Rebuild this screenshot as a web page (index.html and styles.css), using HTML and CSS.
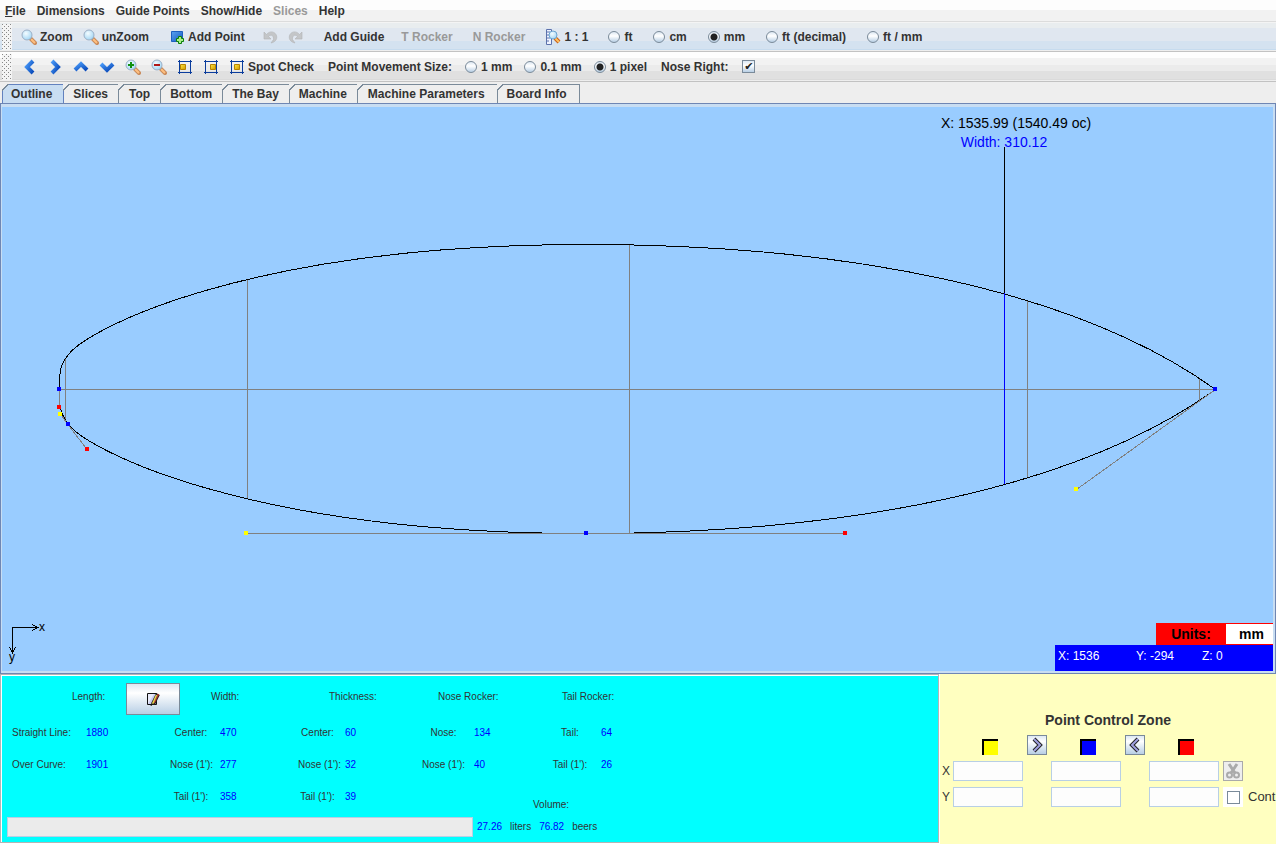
FILE: index.html
```html
<!DOCTYPE html>
<html lang="en">
<head>
<meta charset="utf-8">
<title>Board Designer</title>
<link rel="stylesheet" href="styles.css">
</head>
<body>
<svg class="defs" width="0" height="0" aria-hidden="true">
  <defs>
    <linearGradient id="gold" x1="0" y1="0" x2="1" y2="1"><stop offset="0" stop-color="#ffe640"/><stop offset="1" stop-color="#d09a00"/></linearGradient>
    <linearGradient id="blue" x1="0" y1="0" x2="1" y2="1"><stop offset="0" stop-color="#5aa2f0"/><stop offset="1" stop-color="#1458c0"/></linearGradient>
    <linearGradient id="arrow" x1="0" y1="0" x2="1" y2="1"><stop offset="0" stop-color="#4a9af8"/><stop offset="1" stop-color="#0848b8"/></linearGradient>
    <radialGradient id="lens" cx="0.4" cy="0.35" r="0.7"><stop offset="0" stop-color="#f4fcff"/><stop offset="1" stop-color="#9ed4f4"/></radialGradient>
    <symbol id="magnifier" viewBox="0 0 16 16">
      <path d="M9 9l5 5" stroke="#c98a5a" stroke-width="4" stroke-linecap="round"/>
      <path d="M10 10l4 4" stroke="#ffc080" stroke-width="2"/>
      <path d="M8 8l2 2" stroke="#8a9097" stroke-width="2"/>
      <circle cx="6" cy="6" r="5" fill="url(#lens)" stroke="#9db0c6"/>
    </symbol>
    <symbol id="undo" viewBox="0 0 16 16">
      <path d="M2 3v7h7L6.500 7.500C9 5 12 6.500 11.500 10.500L9 14c5-1 7-5 5-8.500C12 2 7 2 4.500 5.500z" fill="#c4c6c8" stroke="#b2b4b6" stroke-width=".6"/>
    </symbol>
  </defs>
</svg>
<div class="app">
  <nav class="menubar">
    <button><u>F</u>ile</button><button>Dimensions</button><button>Guide Points</button><button>Show/Hide</button><button disabled>Slices</button><button>Help</button>
  </nav>

  <div class="toolbar toolbar-blue">
    <span class="grip"></span>
    <button class="tool"><svg class="icon"><use href="#magnifier"/></svg>Zoom</button>
    <button class="tool"><svg class="icon"><use href="#magnifier"/></svg>unZoom</button>
    <button class="tool space-m"><svg class="icon" viewBox="0 0 16 16"><path d="M2.500 2.500h11v10h-11z" fill="url(#blue)" stroke="#1d5fc0"/><path d="M9.500 7.500h3v2h2v3h-2v2h-3v-2h-2v-3h2z" fill="#a8f088" stroke="#0a7d0a"/></svg>Add Point</button>
    <button class="tool space-s" disabled aria-label="Undo"><svg class="icon"><use href="#undo"/></svg></button>
    <button class="tool" disabled aria-label="Redo"><svg class="icon flip"><use href="#undo"/></svg></button>
    <button class="tool space-m">Add Guide</button>
    <button class="tool space-s" disabled>T Rocker</button>
    <button class="tool space-m" disabled>N Rocker</button>
    <button class="tool space-m"><svg class="icon" viewBox="0 0 16 16"><path d="M1.500 .5h5v15h-5z" fill="#eef3ff" stroke="#5c72ac"/><path d="M2 3h3M2 6h2M2 9h3M2 12h2" stroke="#5c72ac"/><path d="M10 9l4 4" stroke="#c86018" stroke-width="4"/><path d="M10 9l4 4" stroke="#ffc060" stroke-width="2"/><circle cx="8" cy="6" r="4" fill="url(#lens)" stroke="#6ea4d0"/></svg>1 : 1</button>
    <div class="units" role="radiogroup" aria-label="Units">
      <label class="choice"><input type="radio" name="unit">ft</label>
      <label class="choice"><input type="radio" name="unit">cm</label>
      <label class="choice"><input type="radio" name="unit" checked>mm</label>
      <label class="choice"><input type="radio" name="unit">ft (decimal)</label>
      <label class="choice"><input type="radio" name="unit">ft / mm</label>
    </div>
  </div>

  <div class="toolbar toolbar-gray">
    <span class="grip"></span>
    <button class="tool" aria-label="Pan left"><svg class="icon" viewBox="0 0 16 16"><path d="M12 2L6 8l6 6" class="chevron"/></svg></button>
    <button class="tool" aria-label="Pan right"><svg class="icon" viewBox="0 0 16 16"><path d="M5 2l6 6-6 6" class="chevron"/></svg></button>
    <button class="tool" aria-label="Pan up"><svg class="icon" viewBox="0 0 16 16"><path d="M2 11l6-6 6 6" class="chevron"/></svg></button>
    <button class="tool" aria-label="Pan down"><svg class="icon" viewBox="0 0 16 16"><path d="M2 5l6 6 6-6" class="chevron"/></svg></button>
    <button class="tool" aria-label="Zoom in"><svg class="icon" viewBox="0 0 16 16"><use href="#magnifier"/><path d="M3 6h6M6 3v6" stroke="#109010" stroke-width="2"/></svg></button>
    <button class="tool" aria-label="Zoom out"><svg class="icon" viewBox="0 0 16 16"><use href="#magnifier"/><path d="M3 6h6" stroke="#b01818" stroke-width="2"/></svg></button>
    <button class="tool" aria-label="Fit left"><svg class="icon" viewBox="0 0 16 16"><path d="M2.500 1v14M13.500 1v14M1 2.500h14M1 13.500h14" stroke="#0a3c9c"/><path d="M3.500 5.500h5v5h-5z" fill="url(#gold)" stroke="#b88400"/></svg></button>
    <button class="tool" aria-label="Fit right"><svg class="icon" viewBox="0 0 16 16"><path d="M2.500 1v14M13.500 1v14M1 2.500h14M1 13.500h14" stroke="#0a3c9c"/><path d="M7.500 5.500h5v5h-5z" fill="url(#gold)" stroke="#b88400"/></svg></button>
    <button class="tool"><svg class="icon" viewBox="0 0 16 16"><path d="M2.500 1v14M13.500 1v14M1 2.500h14M1 13.500h14" stroke="#0a3c9c"/><path d="M5.500 5.500h5v5h-5z" fill="url(#gold)" stroke="#b88400"/></svg>Spot Check</button>
    <div class="steps" role="radiogroup" aria-labelledby="step-title">
      <span id="step-title">Point Movement Size:</span>
      <label class="choice"><input type="radio" name="step">1 mm</label>
      <label class="choice"><input type="radio" name="step">0.1 mm</label>
      <label class="choice"><input type="radio" name="step" checked>1 pixel</label>
    </div>
    <label class="nose">Nose Right: <input type="checkbox" checked></label>
  </div>

  <div class="tabs" role="tablist">
    <button role="tab" aria-selected="true">Outline</button><button role="tab">Slices</button><button role="tab">Top</button><button role="tab">Bottom</button><button role="tab">The Bay</button><button role="tab">Machine</button><button role="tab">Machine Parameters</button><button role="tab">Board Info</button>
  </div>

  <main class="view">
    <svg class="drawing" viewBox="2 107 1271 564" role="img" aria-label="Board outline">
      <g class="guide">
        <path d="M59 389.500H1215M65.500 358v62M247.500 280v218M629.500 245v288M1027.500 301v177M1199.500 378v23"/>
      </g>
      <g class="outline">
        <path d="M59.500 389.500C59.500 371.500 59.500 365.500 68.500 354.500C87.500 329.500 246.500 244.500 586.500 244.500C845.500 244.500 1076.500 289.500 1215.500 389.500"/>
        <path d="M59.500 403C60.500 410.500 63.500 418.500 68.500 424.500C87.500 449.500 246.500 533.500 586.500 533.500C845.500 533.500 1076.500 489.500 1215.500 389.500"/>
        <path d="M1004.500 147v146"/>
      </g>
      <path class="measure" d="M1004.500 293v191"/>
      <g class="guide">
        <path d="M59.500 389v18M60 413.500l8 11l19 25M246 533.500H845M1076.500 489.500l139-100"/>
      </g>
      <g class="points">
        <path fill="#00f" d="M57 387h4v4h-4zM66 422h4v4h-4zM584 531h4v4h-4zM1213 387h4v4h-4z"/>
        <path fill="#f00" d="M57 405h4v4h-4zM85 447h4v4h-4zM843 531h4v4h-4z"/>
        <path fill="#ff0" d="M58 412h4v4h-4zM244 531h4v4h-4zM1074 487h4v4h-4z"/>
      </g>
      <path class="axis" d="M38 627.500H12.500V652M32 624.500l6 3l-6 3M9.500 647l3 6l3-6"/>
      <text class="axis-name" x="39" y="631">x</text>
      <text class="axis-name" x="9" y="661">y</text>
      <text class="reading" x="1016" y="128">X: 1535.99 (1540.49 oc)</text>
      <text class="reading reading-width" x="1004" y="147">Width: 310.12</text>
    </svg>
    <div class="status">
      <div class="unit-badge"><b class="unit-title">Units:</b><b class="unit-value">mm</b></div>
      <div class="coords"><span>X: 1536</span><span>Y: -294</span><span>Z: 0</span></div>
    </div>
  </main>

  <div class="bottom">
    <section class="stats">
      <div class="figures">
        <span class="head head-length">Length:</span>
        <button class="edit" aria-label="Edit length"><svg class="icon" viewBox="0 0 16 16"><path d="M2.500 2.500h9v11h-9z" fill="#c8ccf0" stroke="#111"/><path d="M3 13V3h6z" fill="#fff" opacity=".6"/><path d="M13 3L8 13" stroke="#222" stroke-width="4"/><path d="M13.500 3L9 12" stroke="#b83a30" stroke-width="1.500"/><path d="M11.500 4L7.500 13" stroke="#e8dc50" stroke-width="1.500"/><path d="M7 12l-1 3" stroke="#111"/></svg></button>
        <span class="head c3">Width:</span><span class="head c5">Thickness:</span><span class="head c7">Nose Rocker:</span><span class="head c9">Tail Rocker:</span>

        <span class="name">Straight Line:</span><span class="num">1880</span>
        <span class="label">Center:</span><span class="num">470</span>
        <span class="label">Center:</span><span class="num">60</span>
        <span class="label">Nose:</span><span class="num">134</span>
        <span class="label">Tail:</span><span class="num">64</span>

        <span class="name">Over Curve:</span><span class="num">1901</span>
        <span class="label">Nose (1'):</span><span class="num">277</span>
        <span class="label">Nose (1'):</span><span class="num">32</span>
        <span class="label">Nose (1'):</span><span class="num">40</span>
        <span class="label">Tail (1'):</span><span class="num">26</span>

        <span class="label third">Tail (1'):</span><span class="num">358</span>
        <span class="label">Tail (1'):</span><span class="num">39</span>
        <span class="volume-title">Volume:</span>
      </div>
      <div class="volume">
        <div class="bar" role="progressbar" aria-label="Volume"></div>
        <span class="num">27.26</span><span>liters</span><span class="num">76.82</span><span>beers</span>
      </div>
    </section>

    <section class="points-panel">
      <h2>Point Control Zone</h2>
      <div class="point-grid">
        <span></span><i class="swatch yellow"></i>
        <button class="mini" aria-label="Copy right"><svg class="icon" viewBox="0 0 16 16"><path d="M5 2l6 6-6 6" class="mini-edge"/><path d="M5 2l6 6-6 6" class="mini-fill"/></svg></button>
        <i class="swatch blue"></i>
        <button class="mini" aria-label="Copy left"><svg class="icon" viewBox="0 0 16 16"><path d="M11 2L5 8l6 6" class="mini-edge"/><path d="M11 2L5 8l6 6" class="mini-fill"/></svg></button>
        <i class="swatch red"></i>
        <span class="row-name">X</span><input class="f1" type="text" aria-label="Yellow X"><input class="f2" type="text" aria-label="Blue X"><input class="f3" type="text" aria-label="Red X">
        <button class="mini cut" disabled aria-label="Cut"><svg class="icon" viewBox="0 0 16 16"><path d="M4 1l6 9M12 1L6 10" stroke="#aaa" stroke-width="3"/><circle cx="4.500" cy="12" r="2.500" fill="none" stroke="#aaa" stroke-width="2"/><circle cx="11.500" cy="12" r="2.500" fill="none" stroke="#aaa" stroke-width="2"/></svg></button>
        <span class="row-name">Y</span><input class="f1" type="text" aria-label="Yellow Y"><input class="f2" type="text" aria-label="Blue Y"><input class="f3" type="text" aria-label="Red Y">
        <label class="cont"><span class="check-back"><input type="checkbox"></span>Cont</label>
      </div>
    </section>
  </div>
</div>
</body>
</html>
```
FILE: styles.css
```css
* { box-sizing: border-box; }
body {
  margin: 0;
  font: bold 12px/16px "Liberation Sans", Arial, sans-serif;
  color: #333;
  background: #eee;
}
.defs { position: absolute; }
.app { display: flex; flex-direction: column; height: 100vh; overflow: hidden; }
button { font: inherit; color: inherit; background: none; border: 0; padding: 0; margin: 0; white-space: nowrap; }
button:disabled { color: #999; }
.icon { width: 16px; height: 16px; flex: none; fill: none; display: block; }
.flip { transform: scaleX(-1); }

.menubar {
  display: flex;
  height: 22px;
  gap: 11px;
  padding: 0 5px;
  background: linear-gradient(#fdfdfd 10px, #f2f2f2 10px);
  border-bottom: 1px solid #dcdcdc;
}
.toolbar {
  display: flex;
  align-items: center;
  height: 30px;
  padding-left: 2px;
  border-bottom: 1px solid #c2c2c2;
  white-space: nowrap;
}
.toolbar-blue { background: linear-gradient(#f4f4f4 1px, #e9edef 1px 6px, #e0e7f0 6px 19px, #d4e2f0 19px 27px, #c6dbee 27px 28px, #eee 28px); }
.toolbar-gray { background: linear-gradient(#fdfdfd 6px, #f2f2f2 6px 13px, #ebebeb 13px 19px, #e0e0e0 19px 27px, #dadada 27px 28px, #eee 28px); }
.grip {
  width: 10px;
  height: 26px;
  margin-right: 4px;
  background-color: #f4f4f4;
  background-image:
    conic-gradient(from 270deg at 1px 1px, #888 90deg, transparent 90deg),
    conic-gradient(from 270deg at 1px 1px, #888 90deg, transparent 90deg);
  background-size: 4px 4px;
  background-position: 0 0, 2px 2px;
}
.tool { display: flex; align-items: center; gap: 3px; height: 26px; padding: 0 5px; }
.space-s { margin-left: 7px; }
.space-m { margin-left: 10px; }
.chevron { stroke: url(#arrow); stroke-width: 4; }
.units { display: flex; gap: 21px; margin-left: 15px; }
.steps { display: flex; align-items: center; gap: 12px; margin-left: 9px; }
#step-title { margin-right: 1px; }
.nose { display: flex; align-items: center; gap: 14px; margin-left: 14px; }
.choice { display: flex; align-items: center; gap: 4px; }
input { appearance: none; margin: 0; border-radius: 0; }
input[type="radio"] {
  width: 12px;
  height: 12px;
  border: 1px solid #7a8a99;
  border-radius: 50%;
  background: linear-gradient(#dde8f3, #fff 40%, #b8cfe5);
}
input[type="radio"]:checked { background: radial-gradient(circle, #222 3px, transparent 4px), linear-gradient(#dde8f3, #fff 40%, #b8cfe5); }
input[type="checkbox"] {
  width: 13px;
  height: 13px;
  border: 1px solid #7a8a99;
  background: linear-gradient(#dde8f3, #fff 40%, #b8cfe5);
}
input[type="checkbox"]:checked::before { content: "✔"; display: block; font: 11px/11px "DejaVu Sans", sans-serif; color: #222; text-align: center; }

.tabs { display: flex; height: 22px; padding: 2px 0 0 2px; border-bottom: 1px solid #6382bf; }
.tabs button {
  position: relative;
  padding: 0 10px 0 9px;
  line-height: 18px;
  border: 1px solid #7a8a99;
  border-width: 1px 1px 0 0;
}
.tabs button::before {
  content: "";
  position: absolute;
  top: -1px;
  left: -1px;
  width: 7px;
  height: 7px;
  background: linear-gradient(135deg, #eee 4px, #7a8a99 4px 5px, transparent 5px);
}
.tabs button[aria-selected="true"] {
  margin-bottom: -1px;
  padding: 0 11px 1px 8px;
  background: #c8ddf2;
  border-color: #6382bf;
  border-left-width: 1px;
}
.tabs button:nth-child(3), .tabs button:nth-child(7) { padding-left: 10px; }
.tabs button:nth-child(7), .tabs button:last-child { padding-right: 12px; }

.view {
  flex: 1;
  min-height: 0;
  position: relative;
  background: #99ccff;
  border: solid #c8ddf2;
  border-width: 3px 2px 2px 1px;
  outline: 1px solid #6e86b4;
  margin: 0 1px 1px;
}
.drawing { display: block; width: 100%; height: 100%; shape-rendering: crispEdges; }
.guide { fill: none; stroke: #808080; }
.outline { fill: none; stroke: #000; }
.measure { stroke: #00f; }
.axis { fill: none; stroke: #000; }
.axis-name { font: 12px "Liberation Sans", Arial, sans-serif; fill: #000; }
.reading { font: 14px "Liberation Sans", Arial, sans-serif; fill: #000; text-anchor: middle; }
.reading-width { fill: #00f; }
.status { position: absolute; right: 0; bottom: 0; width: 218px; display: flex; flex-direction: column; align-items: flex-end; }
.unit-badge { display: flex; font-size: 14px; line-height: 20px; color: #000; background: #f00; text-align: center; padding: 1px 0; }
.unit-title { width: 70px; }
.unit-value { width: 47px; padding-left: 4px; background: #fff; }
.coords {
  align-self: stretch;
  display: grid;
  grid-template-columns: 78px 66px 1fr;
  height: 26px;
  padding: 3px;
  font-weight: normal;
  color: #fff;
  background: #00f;
}

.bottom { display: grid; grid-template-columns: 1fr 336px; gap: 1px; height: 170px; background: #fff; }
.stats {
  margin-bottom: 1px;
  padding: 5px;
  border: 1px solid #b4b4b4;
  box-shadow: inset 1px 1px 0 #fff;
  background: #0ff;
  font-size: 10px;
  font-weight: normal;
}
.figures {
  display: grid;
  grid-template-columns: 74px 84px 50px 78px 47px 76px 53px 73px 54px 1fr;
  grid-template-rows: 36px 32px 32px 32px;
  align-items: center;
  padding: 1px 0 0 6px;
  white-space: nowrap;
}
.head { padding-bottom: 4px; }
.name { grid-column: 1; }
.head-length { grid-column: 1; padding-left: 60px; }
.edit {
  display: flex;
  align-items: center;
  justify-content: center;
  width: 54px;
  height: 32px;
  margin-left: 40px;
  border: 1px solid #7a8a99;
  background: linear-gradient(#dde8f3, #fff 30%, #b8cfe5);
}
.c3 { grid-column: 3; padding-left: 41px; }
.c5 { grid-column: 5; padding-left: 31px; }
.c7 { grid-column: 7; padding-left: 17px; }
.c9 { grid-column: 9; padding-left: 15px; }
.label { text-align: center; padding-right: 8px; }
.num { color: #00f; }
.third { grid-column: 3; }
.volume-title { grid-column: 8 / 10; padding: 16px 0 0 59px; }
.volume { display: flex; align-items: center; gap: 8px; margin-top: 4px; }
.bar { width: 466px; height: 20px; margin: 0 -4px 0 1px; background: #ebebeb; border: 1px solid #b8cfe5; }

.points-panel { background: #ffffc0; overflow: hidden; padding-top: 36px; }
.points-panel h2 { margin: 0; font-size: 14px; line-height: 20px; text-align: center; }
.point-grid {
  display: grid;
  grid-template-columns: 11px 70px 28px 70px 28px 70px 4px 1fr;
  grid-template-rows: 20px 20px 20px;
  row-gap: 6px;
  align-items: center;
  justify-items: center;
  padding: 5px 0 0 2px;
  font-weight: normal;
}
.swatch { width: 16px; height: 16px; margin-left: 4px; border: solid #000; border-width: 2px 0 0 2px; align-self: end; }
.yellow { background: #ff0; }
.blue { background: #00f; }
.red { background: #f00; }
.mini {
  display: flex;
  align-items: center;
  justify-content: center;
  width: 20px;
  height: 20px;
  border: 1px solid #7a8a99;
  background: linear-gradient(#dde8f3, #fff 30%, #b8cfe5);
}
.mini-edge { stroke: #222; stroke-width: 4; }
.mini-fill { stroke: #a0a0e0; stroke-width: 2; }
.row-name { grid-column: 1; justify-self: start; }
input[type="text"] { width: 70px; height: 20px; border: 1px solid #b8cfe5; background: #fdfdfd; }
.f1 { grid-column: 2; }
.f2 { grid-column: 4; }
.f3 { grid-column: 6; }
.cut { grid-column: 8; justify-self: start; background: #eee; border-color: #aaa; }
.cont { grid-column: 8; justify-self: start; display: flex; align-items: center; gap: 5px; font-size: 13px; }
.check-back { display: flex; align-items: center; justify-content: center; width: 20px; height: 20px; background: #fff; }
.check-back input[type="checkbox"] { background: #fff; }
```
